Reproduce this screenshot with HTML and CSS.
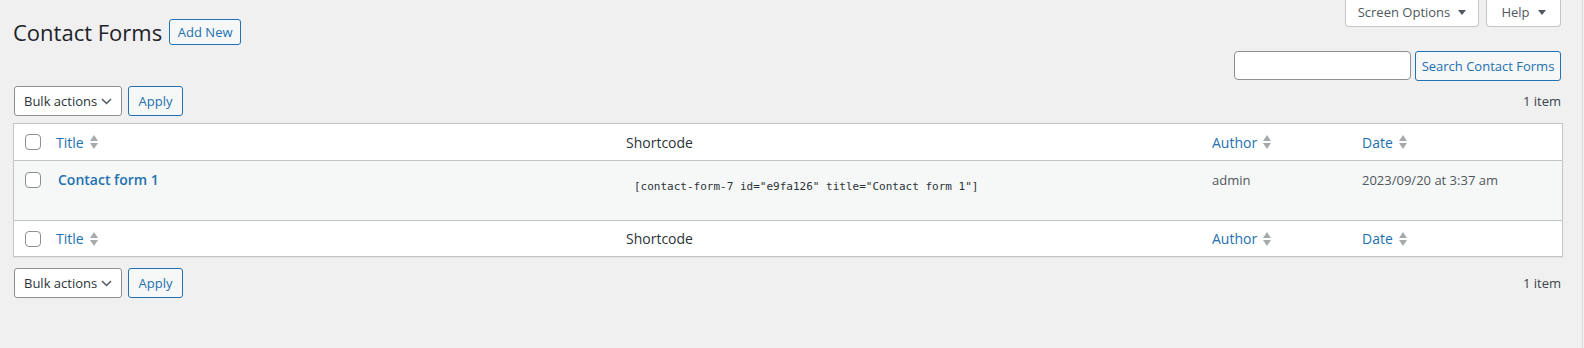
FILE: index.html
```html
<!DOCTYPE html>
<html lang="en">
<head>
    <meta charset="UTF-8">
    <meta name="viewport" content="width=device-width, initial-scale=1.0">
    <title>Contact Forms</title>
    <link rel="stylesheet" href="styles.css">
</head>
<body>
    <div class="screen">
        <div class="wrap">
            <!-- Page heading and screen tabs -->
            <div class="page-head">
                <div class="title-group">
                    <h1>Contact Forms</h1>
                    <a class="page-title-action" href="#">Add New</a>
                </div>
                <div class="meta-links">
                    <button class="meta-tab meta-tab-options">Screen Options
                        <svg width="8" height="5" viewBox="0 0 8 5"><polygon points="0,0 8,0 4,5" fill="#50575e"/></svg>
                    </button>
                    <button class="meta-tab meta-tab-help">Help
                        <svg width="8" height="5" viewBox="0 0 8 5"><polygon points="0,0 8,0 4,5" fill="#50575e"/></svg>
                    </button>
                </div>
            </div>

            <!-- Search -->
            <form class="search-box" onsubmit="return false;">
                <input type="search" class="search-input">
                <button type="submit" class="button">Search Contact Forms</button>
            </form>

            <!-- Top table nav -->
            <div class="tablenav">
                <div class="bulk">
                    <div class="select">Bulk actions
                        <svg width="11" height="7" viewBox="0 0 11 7"><polyline points="1,1 5.5,5.5 10,1" fill="none" stroke="#50575e" stroke-width="1.5"/></svg>
                    </div>
                    <button class="button">Apply</button>
                </div>
                <span class="displaying-num">1 item</span>
            </div>

            <table class="list-table">
                <colgroup>
                    <col class="col-check">
                    <col class="col-title">
                    <col class="col-shortcode">
                    <col class="col-author">
                    <col class="col-date">
                </colgroup>
                <thead>
                    <tr>
                        <th class="check-column"><input type="checkbox"></th>
                        <th><a class="sort-link" href="#">Title <span class="sort-icon"><svg width="8" height="14" viewBox="0 0 8 14"><polygon points="4,0 8,6 0,6" /><polygon points="0,8 8,8 4,14" /></svg></span></a></th>
                        <th>Shortcode</th>
                        <th><a class="sort-link" href="#">Author <span class="sort-icon"><svg width="8" height="14" viewBox="0 0 8 14"><polygon points="4,0 8,6 0,6" /><polygon points="0,8 8,8 4,14" /></svg></span></a></th>
                        <th><a class="sort-link" href="#">Date <span class="sort-icon"><svg width="8" height="14" viewBox="0 0 8 14"><polygon points="4,0 8,6 0,6" /><polygon points="0,8 8,8 4,14" /></svg></span></a></th>
                    </tr>
                </thead>
                <tbody>
                    <tr class="alternate">
                        <td class="check-column"><input type="checkbox"></td>
                        <td><a class="row-title" href="#">Contact form 1</a></td>
                        <td><code class="shortcode">[contact-form-7 id="e9fa126" title="Contact form 1"]</code></td>
                        <td>admin</td>
                        <td>2023/09/20 at 3:37 am</td>
                    </tr>
                </tbody>
                <tfoot>
                    <tr>
                        <th class="check-column"><input type="checkbox"></th>
                        <th><a class="sort-link" href="#">Title <span class="sort-icon"><svg width="8" height="14" viewBox="0 0 8 14"><polygon points="4,0 8,6 0,6" /><polygon points="0,8 8,8 4,14" /></svg></span></a></th>
                        <th>Shortcode</th>
                        <th><a class="sort-link" href="#">Author <span class="sort-icon"><svg width="8" height="14" viewBox="0 0 8 14"><polygon points="4,0 8,6 0,6" /><polygon points="0,8 8,8 4,14" /></svg></span></a></th>
                        <th><a class="sort-link" href="#">Date <span class="sort-icon"><svg width="8" height="14" viewBox="0 0 8 14"><polygon points="4,0 8,6 0,6" /><polygon points="0,8 8,8 4,14" /></svg></span></a></th>
                    </tr>
                </tfoot>
            </table>

            <!-- Bottom table nav -->
            <div class="tablenav tablenav-bottom">
                <div class="bulk">
                    <div class="select">Bulk actions
                        <svg width="11" height="7" viewBox="0 0 11 7"><polyline points="1,1 5.5,5.5 10,1" fill="none" stroke="#50575e" stroke-width="1.5"/></svg>
                    </div>
                    <button class="button">Apply</button>
                </div>
                <span class="displaying-num">1 item</span>
            </div>
        </div>
    </div>
</body>
</html>
```

FILE: styles.css
```css
/* Basic Reset */
* {
    margin: 0;
    padding: 0;
    box-sizing: border-box;
    font-family: "Segoe UI", "Open Sans", sans-serif;
}

body {
    background-color: #f0f0f1;
    color: #3c434a;
    font-size: 13px;
    height: 348px;
    overflow: hidden;
    white-space: nowrap;
}

a {
    color: #2271b1;
    text-decoration: none;
}

svg {
    flex-shrink: 0;
}

/* Page frame */
.screen {
    width: 1583px;
    height: 348px;
    border-right: 1px solid #dcdcde;
}

.wrap {
    padding: 0 21px 0 13px;
}

/* Heading */
.page-head {
    display: flex;
    justify-content: space-between;
    align-items: flex-start;
    height: 45px;
}

.title-group {
    display: flex;
    align-items: center;
    padding-top: 19px;
}

.title-group h1 {
    font-size: 22px;
    font-weight: 400;
    color: #1d2327;
    line-height: 26px;
    margin-right: 7px;
}

.page-title-action {
    display: inline-flex;
    align-items: center;
    justify-content: center;
    width: 72px;
    height: 26px;
    border: 1px solid #2271b1;
    border-radius: 3px;
    background-color: #f6f7f7;
    font-size: 13px;
    font-weight: 500;
}

/* Screen option tabs */
.meta-links {
    display: flex;
    gap: 7px;
}

.meta-tab {
    display: flex;
    align-items: center;
    justify-content: center;
    gap: 8px;
    height: 27px;
    padding: 0 0 2px;
    border: 1px solid #c3c4c7;
    border-top: none;
    border-radius: 0 0 4px 4px;
    background-color: #fff;
    color: #50575e;
    font-size: 13px;
}

.meta-tab-options {
    width: 134px;
}

.meta-tab-help {
    width: 75px;
}

/* Search */
.search-box {
    display: flex;
    justify-content: flex-end;
    gap: 4px;
    margin-top: 6px;
}

.search-input {
    width: 177px;
    height: 29px;
    border: 1px solid #8c8f94;
    border-radius: 4px;
    background-color: #fff;
    outline: none;
}

.button {
    height: 30px;
    padding: 0;
    border: 1px solid #2271b1;
    border-radius: 3px;
    background-color: #f6f7f7;
    color: #2271b1;
    font-size: 13px;
    white-space: nowrap;
    cursor: pointer;
}

.search-box .button {
    width: 146px;
}

/* Table nav */
.tablenav {
    display: flex;
    justify-content: space-between;
    align-items: center;
    margin-top: 5px;
    height: 30px;
}

.tablenav-bottom {
    margin-top: 11px;
}

.bulk {
    display: flex;
    gap: 6px;
    margin-left: 1px;
}

.select {
    display: flex;
    align-items: center;
    justify-content: space-between;
    width: 108px;
    height: 30px;
    padding: 0 9px 0 9px;
    border: 1px solid #8c8f94;
    border-radius: 3px;
    background-color: #fff;
    color: #2c3338;
    font-size: 13px;
}

.bulk .button {
    width: 55px;
}

.displaying-num {
    color: #3c434a;
    font-size: 13px;
}

/* List table */
.list-table {
    width: 1550px;
    margin-top: 7px;
    table-layout: fixed;
    border-spacing: 0;
    border: 1px solid #c3c4c7;
    background-color: #fff;
    box-shadow: 0 1px 1px rgba(0, 0, 0, 0.04);
}

.col-check { width: 32px; }
.col-title { width: 570px; }
.col-shortcode { width: 586px; }
.col-author { width: 150px; }
.col-date { width: 210px; }

.list-table th {
    height: 36px;
    padding: 0 10px;
    text-align: left;
    font-weight: 400;
    font-size: 14px;
    color: #2c3338;
    vertical-align: middle;
}

.list-table thead th {
    height: 37px;
    border-bottom: 1px solid #c3c4c7;
}

.list-table tfoot th {
    border-top: 1px solid #c3c4c7;
}

.list-table td {
    height: 59px;
    padding: 9px 10px;
    vertical-align: top;
    font-size: 13px;
    color: #50575e;
    line-height: 20px;
}

.alternate td {
    background-color: #f6f7f7;
}

.list-table .check-column {
    padding: 0 0 0 11px;
}

.list-table td.check-column {
    padding-top: 11px;
}

.check-column input {
    appearance: none;
    display: block;
    width: 16px;
    height: 16px;
    border: 1px solid #8c8f94;
    border-radius: 4px;
    background-color: #fff;
}

.sort-link {
    display: inline-flex;
    align-items: center;
    gap: 6px;
}

.sort-icon svg {
    display: block;
    fill: #a7aaad;
}

.row-title {
    font-size: 14px;
    font-weight: 600;
    padding-left: 2px;
}

.shortcode {
    display: block;
    margin-top: 2px;
    padding-left: 8px;
    line-height: 30px;
    font-family: "DejaVu Sans Mono", monospace;
    font-size: 11px;
    color: #2c3338;
    white-space: nowrap;
}
```
